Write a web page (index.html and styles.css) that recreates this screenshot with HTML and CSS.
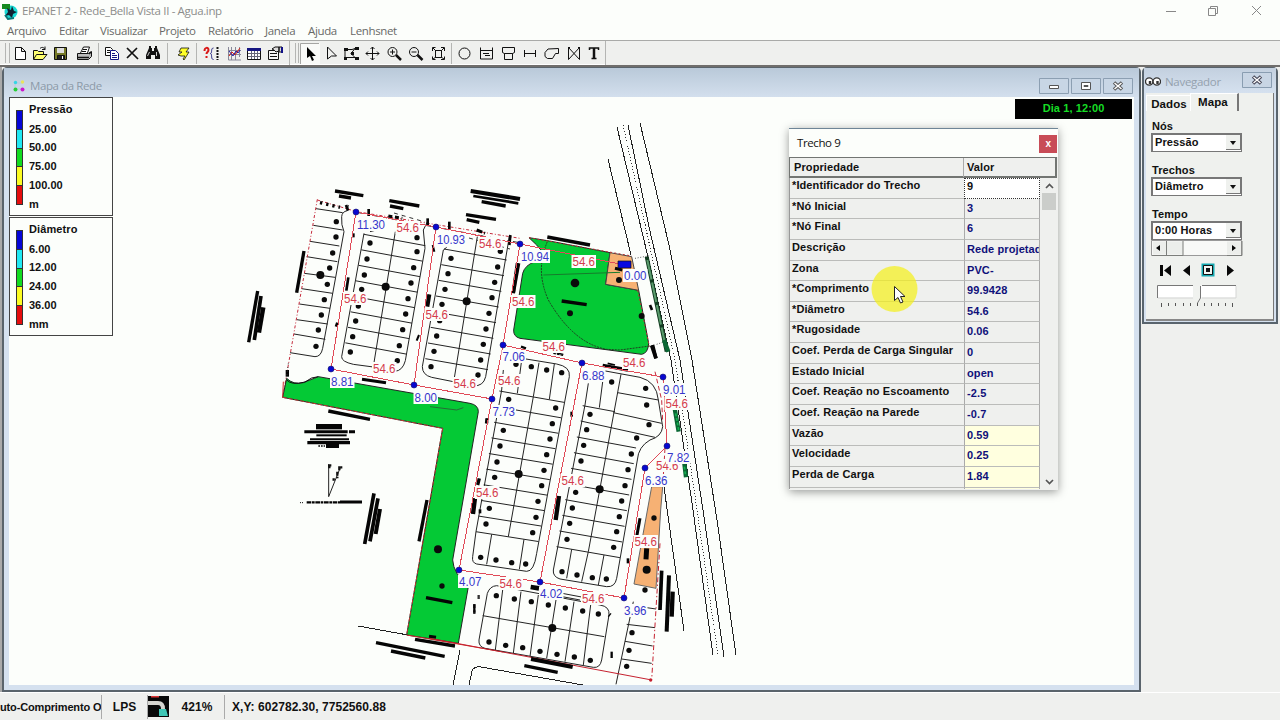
FILE: index.html
```html
<!DOCTYPE html>
<html lang="pt">
<head>
<meta charset="utf-8">
<title>EPANET 2</title>
<link rel="stylesheet" href="styles.css">
</head>
<body>
<header class="titlebar">
  <svg class="app-icon" width="16" height="17" viewBox="0 0 16 17"><circle cx="9" cy="9" r="6.500" fill="#19d9d5"/><path d="M0 1h8v5H0z" fill="#168a20"/><path d="M5 5l4 2 1-4 2 5 3 1-4 2-1 4-3-3-4 1 3-4z" fill="#123"/><path d="M3 12l3 4 6-1" stroke="#0a7779" fill="none" stroke-width="2"/></svg>
  <span class="app-title">EPANET 2 - Rede_Bella Vista II - Agua.inp</span>
  <svg class="win-controls" width="110" height="20" viewBox="1160 0 110 20" fill="none" stroke="#888"><path d="M1166 10.500h10M1208.500 7.500h7v7h-7zM1210.500 7v-1.500h7v7h-1.500M1252 5l9 9M1261 5l-9 9"/></svg>
</header>
<nav class="menu"><span class="m1">Arquivo</span><span class="m2">Editar</span><span class="m3">Visualizar</span><span class="m4">Projeto</span><span class="m5">Relatório</span><span class="m6">Janela</span><span class="m7">Ajuda</span><span class="m8">Lenhsnet</span></nav>
<div class="toolbar">
<svg width="1280" height="27" viewBox="0 40 1280 27" fill="none" stroke="#111">
  <path d="M0 40.500H1280" stroke="#a9aaa8"/><path d="M0 64.500H606" stroke="#fff"/><path d="M0 66H1280" stroke="#706e6c" stroke-width="2"/>
  <path d="M5.500 43v20M9.500 43v20M98.500 43v21M167.500 43v21M196.500 43v21M289.500 41v24M295.500 43v20M298.500 43v20M451.500 43v21M605.500 41v24" stroke="#b4b5b3"/>
  <path d="M301 43h19v21h-19z" fill="#f9faf8" stroke="none"/><path d="M300.500 64V43.500H319" stroke="#a5a5a3"/>
  <path d="M15.500 47.500h6l4 4v8h-10zM21.500 47.500v4h4" fill="#fff"/>
  <path d="M33.500 59V50.500h4l1 1h5v3M33.500 59.500l3-5h10.500l-4 5z" fill="#ffff70"/><path d="M40 48.500c2-2 4-1 5 1m0-3v3h-3"/>
  <path d="M54.500 47.500h12v12h-12z" fill="#777a28"/><path d="M57 48h7v5h-7z" fill="#ddd" stroke="none"/><path d="M57.500 55.500h7v4h-7z" fill="#222"/><path d="M62.500 56v3" stroke="#fff"/>
  <path d="M80.500 53l3-6h6l-2 6" fill="#fff"/><path d="M77.500 53.500h11l3-2v5l-3 3h-11z" fill="#bbb"/><path d="M78 57.500h11M89 54l2-2" stroke-width="1.500"/><path d="M83 49.500h4M82 51.500h4"/>
  <path d="M105.500 47.500h5l2 2v6h-7z" fill="#fff"/><path d="M110.500 50.500h5l3 3v6h-8z" fill="#fff" stroke="#151584"/><path d="M107 50.500h3M107 52.500h3"/><path d="M112 53.500h3M112 55.500h5M112 57.500h5" stroke="#151584"/>
  <path d="M127 48l11 11M137 48L127 58" stroke-width="1.700"/>
  <path d="M149 48h3v3h2v-3h3l3 7v4h-5v-4h-4v4h-5v-4zM149 46h2v2h-2zM155 46h2v2h-2z" fill="#111" stroke="none"/><path d="M149.500 52l-2 4M156.500 52v4" stroke="#ccc"/>
  <path d="M181 48h8l-3 4h3l-5 8-1-1 2-3h-4l-3-1 4-3h-3z" fill="#ffff28" stroke-width=".8"/>
  <path d="M204.500 51c0-4 4-4 4-1 0 2-2 2-2 4M206.500 56v2" stroke="#d91919" stroke-width="2"/><path d="M213.500 48c-3 0-1 5-3 5.500 2 .5 0 6 3 6" stroke="#202080"/><path d="M217.500 47v13" stroke-width="2" stroke-dasharray="2 1"/>
  <path d="M228.500 47v13H241M228 50.500h13M228 54.500h13M231.500 47v13M235.500 47v13M239.500 47v10" stroke="#889"/><path d="M229 56l3-4 3 3 5-7" stroke="#d21"/><path d="M229 51l4 5 3-5 2 2 2-3" stroke="#22a"/>
  <path d="M247.500 48.500h13v11h-13z" fill="#fff"/><path d="M247 49.500h14" stroke="#161681" stroke-width="3"/><path d="M248 53.500h12M248 56.500h12M251.500 51v8M254.500 51v8M257.500 51v8" stroke="#667"/>
  <path d="M268.500 50.500h10v9h-10z" fill="#f4f4f4"/><path d="M270 53.500h7M270 56.500h7"/><path d="M272 49l3-2h4v4l-3 1-2-2zM279 47h3v5h-3z" fill="#ddd"/><path d="M282 47v6" stroke="#118" stroke-width="2"/>
  <path d="M307 47v11l3-2 2 5 2-1-2-4h4z" fill="#000" stroke="none"/><path d="M327.500 47v12l4-3h5z"/>
  <path d="M346 49.500h6l3-1-4 5 4 4h-10v-8z"/><path d="M344 48h4v3h-4zM355 47h4v3h-4zM351 52h3v3h-3zM344 57h3v3h-3zM355 57h4v3h-4z" fill="#111" stroke="none"/>
  <path d="M372.500 47v13M366 53.500h13M370.500 49l2-2 2 2M370.500 58l2 2 2-2M368 51.500l-2 2 2 2M377 51.500l2 2-2 2"/>
  <circle cx="392.500" cy="52" r="4.500"/><path d="M390 52h5M392.500 49.500v5"/><path d="M396 55l5 5" stroke-width="2.500"/><circle cx="414" cy="52" r="4.500"/><path d="M411.500 52h5"/><path d="M417.500 55l5 5" stroke-width="2.500"/>
  <path d="M435.500 50.500h6v7h-6zM432.500 51v-3.500h3M441 47.500h3.500V51M432.500 56.500v3h3M441 59.500h3.500v-3M433 48l3 3M444 48l-3 3M433 59l3-2M444 59l-3-2"/>
  <circle cx="464.500" cy="53.500" r="5.500"/><path d="M480.500 47.500v11.500h12V47.500M480 50.500h12M483 53.500h6M485 55.500h5"/><path d="M502.500 47.500h12v5l-2 1h-8l-2-1zM504.500 53.500h8v6h-8z"/><path d="M524.500 50v7M535.500 50v7M524 53.500h12"/><path d="M558.500 48.500v5h-3l-3 5h-5l-2.500-2v-4l3-3.500z"/><path d="M568.500 47.500v12l11-12v12zM568 47.500h2M578 47.500h2"/>
  <path d="M589.500 50v-2h9v2" stroke-width="1.500"/><path d="M594 48v10.500" stroke-width="2.500"/><path d="M591.500 58.500h5" stroke-width="1.500"/>
</svg>
</div>
<main class="desktop">
  <section class="map-window">
    <div class="map-title">
      <svg width="12" height="12" viewBox="0 0 12 12"><path d="M3 3h7M2 9h7M2 3v6" stroke="#bcd"/><circle cx="2.500" cy="2.500" r="1.700" fill="#35d5e5"/><circle cx="9.500" cy="2" r="1.700" fill="#e9e45c"/><circle cx="2.500" cy="9.500" r="2" fill="#28cf38"/><circle cx="9.500" cy="9.500" r="2" fill="#cc19cc"/></svg>
      <span class="map-name">Mapa da Rede</span>
      <span class="mdi-buttons">
        <svg width="30" height="17"><path d="M.5 .5h29v15H.5z" fill="#c8d6e5" stroke="#8c9fb2"/><path d="M10.500 7.500h9v3h-9z" fill="#fff" stroke="#555"/></svg>
        <svg width="30" height="17"><path d="M.5 .5h29v15H.5z" fill="#c8d6e5" stroke="#8c9fb2"/><path d="M10.500 4.500h9v7h-9z" fill="#fff" stroke="#555"/><path d="M13 7.500h4v1h-4z" stroke="#555"/></svg>
        <svg width="30" height="17"><path d="M.5 .5h29v15H.5z" fill="#c8d6e5" stroke="#8c9fb2"/><path d="M11 4.500l8 7M19 4.500l-8 7" stroke="#555" stroke-width="3.500"/><path d="M11.500 5l7 6M18.500 5l-7 6" stroke="#fff" stroke-width="1.500"/></svg>
      </span>
    </div>
    <div class="map-view">
      <svg class="network" id="network" viewBox="9 97 1125 588" width="1125" height="588"></svg>
      <div class="legends">
        <div class="legend"><div class="scale"><i class="c1"></i><i class="c2"></i><i class="c3"></i><i class="c4"></i><i class="c5"></i></div><div class="ticks"><span class="first">Pressão</span><span>25.00</span><span>50.00</span><span>75.00</span><span>100.00</span><span>m</span></div></div>
        <div class="legend"><div class="scale"><i class="c1"></i><i class="c2"></i><i class="c3"></i><i class="c4"></i><i class="c5"></i></div><div class="ticks"><span class="first">Diâmetro</span><span>6.00</span><span>12.00</span><span>24.00</span><span>36.00</span><span>mm</span></div></div>
      </div>
      <div class="clock">Dia 1, 12:00</div>
    </div>
  </section>
  <aside class="navigator">
    <div class="nav-title">
      <svg width="16" height="12" viewBox="0 0 16 12" fill="#fff" stroke="#333" stroke-width="1.300"><circle cx="4.200" cy="5.500" r="3.700"/><circle cx="11.800" cy="5.500" r="3.700"/><path d="M5 5v3M12.500 5v3" stroke-width="2.400"/></svg>
      <span class="nav-name">Navegador</span>
      <svg class="nav-close" width="31" height="17"><path d="M.5 .5h29v15H.5z" fill="#c8d5e4" stroke="#899db1"/><path d="M11 4.500l8 7M19 4.500l-8 7" stroke="#445" stroke-width="3.500"/><path d="M11.500 5l7 6M18.500 5l-7 6" stroke="#fff" stroke-width="1.300"/></svg>
    </div>
    <div class="nav-body">
      <div class="tabs"><span class="tab">Dados</span><span class="tab on">Mapa</span></div>
      <div class="fields">
        <label>Nós</label><div class="combo"><span>Pressão</span><b><i></i></b></div>
        <label class="l2">Trechos</label><div class="combo"><span>Diâmetro</span><b><i></i></b></div>
        <label class="l3">Tempo</label><div class="combo"><span>0:00 Horas</span><b><i></i></b></div>
        <svg width="92" height="72" viewBox="1151 240 92 72" fill="none">
          <path d="M1151.500 240.500h90v15h-90z" fill="#f8f9f7" stroke="#999"/><path d="M1153 241.500h13v13h-13zM1167 241.500h16v13h-16zM1227 241.500h14v13h-14z" fill="#eceeeb"/><path d="M1166.500 241v14M1152 255.500h31V241M1227 255.500h15V241" stroke="#7c7e7b"/>
          <path d="M1160 245v6l-4-3zM1232 245v6l4-3zM1160 265h3v11h-3zM1171 265v11l-7-5.500zM1190 265v11l-7-5.500zM1227 265v11l7-5.500z" fill="#080808"/>
          <path d="M1202.500 264.500h11v11h-11z" fill="#f3f5f2" stroke="#16aab2" stroke-width="2"/><path d="M1203.500 265.500h9v9h-9z" stroke="#111"/><path d="M1206 268h4v4h-4z" fill="#111"/>
          <path d="M1158 285.500h35v12h-35zM1200 285.500h36v12h-36z" fill="#fff"/><path d="M1157.500 298v-12.500H1193M1202 285.500h34" stroke="#777"/><path d="M1158 298h35M1202 298h34v-12" stroke="#d5d6d4"/><path d="M1193.500 286v13l4 4 3-4v-14z" fill="#f0f2ef"/><path d="M1200.500 286v12l-3 5" stroke="#777"/>
          <path d="M1161.500 303v4M1168.500 303v3M1175.500 303v3M1183.500 303v3M1190.500 303v3M1197.500 303v3M1204.500 303v3M1211.500 303v3M1218.500 303v3M1225.500 303v3M1232.500 303v4" stroke="#555"/>
        </svg>
      </div>
    </div>
  </aside>
  <section class="inspector">
    <div class="insp-title"><span>Trecho 9</span><b>x</b></div>
    <div class="insp-head"><span>Propriedade</span><span>Valor</span></div>
    <div class="insp-body">
      <div class="grid">
        <span>*Identificador do Trecho</span><span class="v focus">9</span>
        <span>*Nó Inicial</span><span class="v">3</span>
        <span>*Nó Final</span><span class="v">6</span>
        <span>Descrição</span><span class="v">Rede projetada</span>
        <span>Zona</span><span class="v">PVC-</span>
        <span>*Comprimento</span><span class="v">99.9428</span>
        <span>*Diâmetro</span><span class="v">54.6</span>
        <span>*Rugosidade</span><span class="v">0.06</span>
        <span>Coef. Perda de Carga Singular</span><span class="v">0</span>
        <span>Estado Inicial</span><span class="v">open</span>
        <span>Coef. Reação no Escoamento</span><span class="v">-2.5</span>
        <span>Coef. Reação na Parede</span><span class="v">-0.7</span>
        <span>Vazão</span><span class="v out">0.59</span>
        <span>Velocidade</span><span class="v out">0.25</span>
        <span>Perda de Carga</span><span class="v out">1.84</span>
        <span></span><span class="v out"></span>
      </div>
      <svg width="18" height="311" viewBox="0 0 18 311" fill="none"><path d="M2 15h14v17H2z" fill="#cbcdca"/><path d="M6 10l3.500-3.500L13 10M6 302l3.500 3.500L13 302" stroke="#555" stroke-width="1.700"/></svg>
    </div>
    <svg class="pointer" width="48" height="48" viewBox="870 266 48 48"><circle cx="894.500" cy="290" r="23" fill="#f4f01d" fill-opacity=".72"/><path d="M894.500 287.500v14l3.500-3 2.500 5.500 2.500-1-2.500-5.500h4.500z" fill="#fff" stroke="#222"/></svg>
  </section>
</main>
<footer class="status">
  <span class="s1">uto-Comprimento O</span><span class="s2">LPS</span>
  <svg width="22" height="24" viewBox="0 0 22 24"><path d="M0 1h21v21H0z" fill="#080808"/><path d="M3 1h8v1.500H3z" fill="#d33"/><path d="M0 8h10q5 0 5 6" fill="none" stroke="#d5d5d0" stroke-width="4"/><path d="M11 14h7l2 7h-9z" fill="#3fc7b6"/></svg>
  <span class="s3">421%</span><span class="s4">X,Y: 602782.30, 7752560.88</span>
</footer>
<script src="map.js"></script>
</body>
</html>
```
FILE: styles.css
```css
*{box-sizing:border-box}
body{margin:0;width:1280px;height:720px;overflow:hidden;display:flex;flex-direction:column;background:#eff0ee;font:bold 11px/14px "Liberation Sans",Arial,sans-serif;letter-spacing:.1px;color:#111}
svg{display:block;flex:none}
.titlebar{height:22px;background:#fcfefb;display:flex;align-items:center;padding:0 10px 0 2px;flex:none}
.app-title{margin-left:4px;font:11.500px/20px "Open Sans","Noto Sans",sans-serif;color:#8c8d8b;letter-spacing:-.35px;flex:1;white-space:nowrap}
.menu{height:18px;background:#fcfefb;flex:none;display:flex;font:11.500px/18px "Open Sans","Noto Sans",sans-serif;color:#686967;letter-spacing:-.35px;padding-left:7px}
.menu span{white-space:nowrap}
.m1{width:52px}.m2{width:41px}.m3{width:59px}.m4{width:49px}.m5{width:57px}.m6{width:43px}.m7{width:42px}
.toolbar{height:27px;flex:none;background:#eff0ee}
.desktop{height:625px;flex:none;display:flex;position:relative;background:#eff0ee;gap:1px;border-left:2px solid #aaa}
.map-window{width:1139px;height:625px;border:2px solid #5a646c;border-top-width:1px;border-radius:5px 5px 0 0;background:#d5e1ef;padding:0 5px 5px}
.map-title{height:29px;display:flex;align-items:center;margin:0 -5px;padding:7px 6px 0 9px;background:linear-gradient(#b9c9d9,#d3dfed)}
.map-name{font:11.500px/16px "Open Sans","Noto Sans",sans-serif;color:#8c9aa8;letter-spacing:-.4px;margin-left:5px;flex:1}
.mdi-buttons{display:flex;gap:2px}
.map-view{position:relative;height:588px;background:#fcfefb}
.network{position:absolute;left:0;top:0}
.network text{font:12px "Liberation Sans",Arial,sans-serif;letter-spacing:0}
.legends{position:absolute;left:0;top:0;display:flex;flex-direction:column;gap:1px}
.legend{width:104px;height:119px;border:1px solid #444;background:#fcfefb;display:flex;padding:12px 6px}
.scale{width:7px;height:95px;border:1px solid #333;display:flex;flex-direction:column}
.scale i{flex:1;border-bottom:1px solid #333}
.c1{background:#0606d7}.c2{background:#20e9f3}.c3{background:#12dc20}.c4{background:#fcfc22}.c5{background:#e50d0d}
.scale .c5{border:0}
.ticks{display:flex;flex-direction:column;margin:-8px 0 0 6px;letter-spacing:0}
.ticks span{height:18.800px;line-height:14px;flex:none}.ticks .first{height:19.500px;letter-spacing:.1px}
.clock{position:absolute;right:2px;top:2px;width:117px;height:20px;background:#000;color:#16dc25;text-align:center;line-height:19px;letter-spacing:.1px}
.navigator{width:136px;height:257px;border:2px solid #59646d;border-top-width:1px;border-radius:5px 5px 0 0;background:#d5e1ef;padding:0 2px 2px}
.nav-title{height:25px;display:flex;padding:2px 0 0;margin:0 -2px;background:linear-gradient(#c3d0df,#d5e1ef);align-items:center}
.nav-name{font:11.500px/14px "Open Sans","Noto Sans",sans-serif;color:#94a1ae;letter-spacing:-.3px;flex:1;margin-left:4px}
.nav-close{margin:-2px 3px 0 0}
.nav-title>svg:first-child{margin-left:1px}
.nav-body{height:228px;background:#eff1ee;border-right:1px solid #777;border-bottom:2px solid #888}
.tabs{display:flex;align-items:flex-end;height:18px;font-size:11.500px}
.tab{width:44px;height:16px;text-align:center;line-height:17px;border-top:1px solid #fff;border-left:1px solid #fff;padding-left:1px}
.tab.on{width:49px;height:18px;border-right:2px solid #777;line-height:16px;text-align:left;padding-left:7px}
.fields{padding:8px 0 0 5px}
.fields label{display:block;height:14px;margin-left:1px}
.fields .l2,.fields .l3{margin-top:11px}
.combo{width:91px;height:19px;border:1px solid #777;border-width:2px 1px 1px 2px;background:#fff;display:flex;justify-content:space-between;padding-left:2px;line-height:15px}
.combo b{width:15px;height:15px;background:#eff1ee;border-right:1px solid #777;border-bottom:1px solid #777;padding:6px 0 0 4px}
.combo i{display:block;border:3.500px solid transparent;border-top:4px solid #111;width:0;height:0}
.inspector{position:absolute;left:787px;top:61px;width:269px;height:362px;background:#eff0ee;border-top:1px solid #6e8597;box-shadow:0 2px 9px #0006}
.insp-title{height:28px;background:#fcfefb;display:flex;justify-content:space-between;padding:0 1px 0 8px;font:11.500px/27px "Open Sans","Noto Sans",sans-serif;letter-spacing:-.4px}
.insp-title b{width:18px;height:18px;background:#c84c57;color:#fff;font:bold 10px/17px "Liberation Sans",sans-serif;text-align:center;margin-top:6px}
.insp-head{display:grid;grid-template-columns:173px 1fr;height:21px;border:2px solid #727572;border-width:1px 2px 2px 1px;margin:0 1px 0 0;line-height:19px}
.insp-head span{padding-left:4px}.insp-head span+span{border-left:1px solid #aaa;padding-left:3px}
.insp-body{display:flex;height:311px;overflow:hidden}
.grid{width:251px;display:grid;grid-template-columns:174px 76px;grid-auto-rows:20.650px;border-left:1px solid #999}
.grid>span{border-bottom:1px solid #bbbcba;padding-left:2px;line-height:14px;white-space:nowrap;overflow:hidden}
.grid .v{border-left:1px solid #aaa;border-right:1px solid #aaa;padding-left:2px;line-height:18px;color:#10107a}
.grid .focus{background:#fff;border:1px dotted #333;color:#111;line-height:15px}
.grid .out{background:#ffffdf}
.pointer{position:absolute;left:81px;top:136px}
.status{height:28px;flex:none;display:flex;align-items:center;background:#eff0ee;border-top:1px solid #fff;font-size:12px;letter-spacing:.05px;padding-top:1px}
.status span{height:24px;line-height:24px;white-space:nowrap;border-right:1px solid #aaa}
.status .s1{width:102px;overflow:hidden;font-size:11px;letter-spacing:-.15px}.s2{width:46px;text-align:center}.s3{width:55px;text-align:center}.status .s4{padding-left:7px;border:0}
```
FILE: map.js
```js
const parts = [];
const add = s => parts.push(s);
// Survey sheets are drawn at three units per pixel, each with its own origin.
const sheet = (x, y, draw) => { add(`<g transform="translate(${x} ${y}) scale(.33333)" stroke-width="3">`); draw(); add('</g>'); };
const path = (d, stroke = '#222', extra = '') => add(`<path d="${d}" fill="none" stroke="${stroke}" ${extra}/>`);
const fill = (d, color, stroke = 'none') => add(`<path d="${d}" fill="${color}" stroke="${stroke}"/>`);
const dots = (list, r = 8) => list.forEach(([x, y]) => add(`<circle cx="${x}" cy="${y}" r="${r}" fill="#0b0b0b" stroke="none"/>`));
const bars = (list) => list.forEach(([a, b, c, d, w = 10, dash = '']) => path(`M${a} ${b}L${c} ${d}`, '#050505', `stroke-width="${w}" stroke-dasharray="${dash}"`));
const rows = (n, l, r, dl, dr, first = 0) => { for (let i = first; i < n; i++) path(`M${l[0] + dl[0] * i} ${l[1] + dl[1] * i}L${r[0] + dr[0] * i} ${r[1] + dr[1] * i}`); };

add('<g stroke-width="1" shape-rendering="crispEdges">');
path('M617 127L648 257 671 360 693 510 713 655M628 125L649 227 680 360 703 510 724 657M640 123L669 245 692 360 717 520 736 655M608 159L631 255M664 487L684 631');
path('M623 125L675 360 697 510 718 655', '#333', 'stroke-dasharray="1 2"');
path('M358 626L408 635M460 650L453 685M469 685L472 671Q474 666 481 667L583 685');
add('</g>');

sheet(240, 170, () => {
  path('M228 116L308 128M220 166L308 180M210 214L298 228M200 260L292 275M193 310L285 322M185 356L278 370M178 402L270 415M170 449L263 462M162 492L256 508M150 548L225 560Q243 560 248 535L312 185Q303 165 305 140Q306 125 322 122L325 105');
  path('M232 88L128 682M232 90L350 125 840 205', '#c52b3c', 'stroke-dasharray="9 6 3 6"');
  path('M350 127L588 172 838 218', '#333', 'stroke-dasharray="16 20 3 14"');
  path('M372 190L305 560Q304 575 340 583L400 591L465 604Q488 602 496 572L555 235 550 180 565 150M466 185L400 590M390 185L410 180');
  rows(8, [372, 193], [556, 227], [-8, 46.5], [-8, 46.5]);
  path('M620 232L610 240 547 590Q547 615 575 622L700 647Q730 650 737 620L808 200M712 200L642 630');
  rows(8, [612, 237], [800, 270], [-8, 47], [-8, 47]);
  dots([[289,155],[288,201],[278,249],[269,294],[262,343],[253,389],[244,435],[235,480],[228,529],[531,203],[531,245],[521,293],[513,339],[504,386],[497,432],[488,479],[478,527],[472,572],[390,219],[381,267],[373,315],[365,358],[355,408],[347,453],[338,500],[331,546],[781,244],[773,291],[764,337],[756,383],[747,430],[738,477],[730,523],[722,570],[714,615],[633,265],[624,311],[615,358],[606,403],[599,452],[590,498],[582,544],[573,590]]);
  dots([[241,315],[437,350],[680,394]], 12);
  bars([[285,63,370,77],[297,78,333,84],[448,92,538,108],[450,108,490,116],[692,63,840,87,12],[700,78,835,100,8],[725,95,797,108],[678,134,768,148],[680,149,718,157],[192,243,170,368],[53,363,26,517],[63,378,43,510,11],[70,412,57,488,13],[325,322,319,362,8],[568,373,562,410,12],[836,280,820,370,10],[240,98,300,112,10,'7 12'],[445,138,487,145,9,'12 8'],[710,180,735,190,9,'18 6'],[386,117,386,138,8],[563,145,563,168,8],[628,155,628,180,8],[811,195,808,225,8],[142,600,142,620,10],[366,628,438,638,9],[318,105,324,122,8],[578,225,583,245,6],[340,190,340,202,8],[292,458,288,470,8],[537,495,530,512,6]]);
});

sheet(460, 110, () => {
  fill('M207 383L268 393 450 428 437 523 536 541 566 700Q564 730 545 733L180 685Q160 680 161 660L188 490Q195 465 225 455L268 450L230 405Z', '#04c935', '#222');
  fill('M450 428L515 440 536 541 437 523Z', '#f6b174', '#444');
  path('M262 395Q225 480 265 570Q340 700 440 718L480 720 570 708', '#203c20', 'stroke-dasharray="6 3"');
  path('M250 495L480 487', '#167b2c');
  path('M207 383L515 438M533 541L568 710', '#b33', 'stroke-dasharray="6 7"');
  dots([[345,519]], 13); dots([[330,610],[477,510],[545,618]], 9);
  bars([[305,573,380,584],[262,381,390,405],[172,460,160,548],[575,706,588,745,11],[570,585,576,600,8],[465,475,487,480,9],[290,729,310,733,4]]);
  path('M560 440L620 725', '#123d20', 'stroke-width="12"'); path('M562 450L618 715', '#5a9b6c', 'stroke-width="6" stroke-dasharray="60 9"');
  path('M525 445L570 437M590 703L608 697', '#555', 'stroke-dasharray="3 5"');
});

sheet(240, 360, () => {
  fill('M140 55Q160 75 190 68L235 50 690 130Q715 135 715 155L638 600Q640 640 685 680L655 850L500 825L608 205L128 112Z', '#04c935', '#222');
  path('M140 60Q155 77 195 66Q215 50 235 50', '#111'); path('M145 10L140 50', '#333', 'stroke-dasharray="3 8"');
  path('M608 205L500 825M128 112L608 205', '#bb3a31', 'stroke-dasharray="12 6"');
  path('M570 140L650 150 670 143', '#246b35');
  path('M500 825L790 876M130 65L128 112', '#cd2c2c');
  dots([[594,568]], 12); dots([[606,678]], 8);
  bars([[265,153,390,178],[228,200,306,200,16],[193,215,345,215,9,'130 4'],[229,226,320,226,6],[210,238,327,238,6],[202,248,330,248,10],[258,258,297,258,12],[235,258,255,258,5,'5 3'],[558,713,637,728],[408,848,614,889],[453,873,556,894],[525,838,645,858],[567,829,588,832,9],[402,400,374,552,11],[414,415,390,544,11],[420,447,407,522,12],[561,420,537,544,10],[200,427,300,427,7,'14 2 8 2'],[300,426,366,426,9],[180,428,190,428,3,'3 3'],[740,175,738,190,7]]);
  path('M266 410V313M266 410L302 320');
  path('M264 316h10M268 313v14M298 319v15M302 322h5M292 335v20M281 355v7', '#111', 'stroke-width="7" stroke-dasharray="12 3"');
  path('M703 732v30M716 705v15', '#333', 'stroke-width="7" stroke-dasharray="12 7"');
});

sheet(440, 340, () => {
  path('M215 50L350 72Q392 80 388 110L290 640Q282 695 260 694L110 672Q95 668 98 650L108 575 185 150 190 90M245 60L232 160M297 68L280 170 205 590M343 72L328 178');
  rows(10, [178, 153], [372, 187], [-7.8, 46.9], [-8.5, 46.4]);
  path('M155 583L140 673M252 598L238 688', '#222');
  path('M480 90L600 112Q650 125 655 180L668 260Q665 290 630 300Q595 320 592 360L530 715Q525 742 500 740L360 717Q338 710 340 690L435 195 445 130M490 110L478 203M543 103L445 635M428 197L525 215M533 158L655 180M520 218L665 250M422 243L645 292');
  rows(10, [428, 197], [602, 230], [-8.7, 47], [-6.9, 47], 2);
  path('M395 628L380 715M445 635L425 725M492 645L475 735');
  fill('M635 440L668 440 662 510 648 745 582 732Z', '#f6b174', '#666');
  dots([[228,73],[274,80],[320,90],[365,98],[206,178],[347,204],[337,251],[330,297],[320,344],[312,391],[305,437],[294,484],[288,532],[190,271],[180,318],[171,366],[164,412],[148,505],[138,552],[278,578],[122,652],[168,660],[215,668],[257,672],[515,126],[617,145],[620,195],[627,254],[590,294],[574,342],[564,389],[555,437],[545,483],[538,530],[530,575],[521,622],[450,223],[440,269],[431,316],[423,363],[407,457],[397,504],[389,550],[381,598],[366,695],[411,705],[457,713],[499,717],[642,534]]);
  dots([[236,402],[479,448]], 12); dots([[620,689]], 12);
  bars([[488,76,564,90],[105,475,99,522,13],[357,468,347,540,13],[638,15,648,55,10],[118,415,113,435,10],[715,360,715,375,5],[600,535,590,590,9],[620,625,618,658,15],[665,692,660,810,11],[687,706,680,875,12],[698,755,695,830,13],[243,20,258,25,7],[340,40,372,47,4,'8 3'],[503,70,525,75,5],[141,235,141,250,8],[395,215,395,230,8],[120,508,120,520,8],[564,655,564,670,8]]);
  path('M672 0L685 35M704 205L716 275M733 370L738 412', '#0b6734', 'stroke-width="13"');
  path('M707 220L716 270M733 380L737 408', '#13b150', 'stroke-width="5" stroke-dasharray="9 5"');
  path('M645 95L665 180 668 245M675 325L668 440', '#c52b3c', 'stroke-dasharray="14 8"');
});

sheet(430, 510, () => {
  path('M172 250Q180 228 200 227L510 285Q540 290 537 315L515 450Q510 475 490 472L165 415Q145 410 147 390ZM158 317L523 380M218 240L196 420M273 245L250 430M325 255L300 440M378 270L350 445M432 275L405 455M482 285L460 465M610 275L558 523M615 288L678 297M590 343L675 353M585 394L668 408M575 447L665 460M370 245L460 262M370 255L450 270');
  dots([[199,257],[253,267],[304,275],[355,285],[406,294],[458,303],[505,312],[177,396],[227,406],[278,413],[330,424],[381,433],[433,441],[481,451],[606,368],[597,421],[590,469],[645,240]]);
  dots([[367,354]], 12);
  path('M0 385L665 510', '#c5202e'); path('M690 100L665 510', '#c5202e', 'stroke-dasharray="15 7 4 8"');
  add('<circle cx="662" cy="510" r="5" fill="#c5202e" stroke="none"/>');
  bars([[303,447,428,471,12],[283,467,383,487],[302,231,327,235,14],[545,425,545,444,7],[133,283,133,308,7],[543,310,535,320,4]]);
});

const nodes = [[356,212],[436,227],[520,244],[331,369],[414,385],[492,399],[503,345],[582,363],[663,377],[667,446],[645,468],[459,570],[540,582],[624,598]];
path('M331 369L356 212 436 227 520 244 625 265M331 369L414 385 492 399M436 227L414 385M520 244L503 345 492 399 459 570 540 582 624 598 645 468 667 446 663 377 582 363 503 345M582 363L540 582', '#e04a57', 'shape-rendering="crispEdges"');
path('M394 213L425 222M469 238L510 249', '#333', 'stroke-dasharray="4 4"');
const label = (x, y, t, color) => {
  const w = t.length === 5 ? 28 : 22.5;
  add(`<rect x="${x - 1}" y="${y - 6}" width="${w + 2}" height="13" fill="#fcfefb"/><text x="${x}" y="${y + 4.5}" textLength="${w}" lengthAdjust="spacingAndGlyphs" fill="${color}">${t}</text>`);
};
[[396.5,227],[479,243],[572.5,261],[344,298],[425.5,314],[512,301],[373,368],[453.5,383],[542.5,346],[623,362],[498,380],[665.500,403],[656,465],[561.5,480],[476,492],[634.5,541],[499.5,583],[582,598]].forEach(([x, y]) => label(x, y, '54.6', '#d43b4c'));
[[357,224,'11.30'],[437,239,'10.93'],[521,256,'10.94'],[624,275,'0.00'],[331,381,'8.81'],[414.5,397,'8.00'],[492.5,411,'7.73'],[502.5,356,'7.06'],[582,375,'6.88'],[663,389,'9.01'],[667,457,'7.82'],[645,480,'6.36'],[459,581,'4.07'],[540,593,'4.02'],[624,610,'3.96']].forEach(([x, y, t]) => label(x, y, t, '#3636cb'));
add('<path d="M618 261h13v7h-13z" fill="#0808df" stroke="#111" stroke-width=".7"/>');
nodes.forEach(([x, y]) => add(`<circle cx="${x}" cy="${y}" r="3" fill="#0808cf" stroke="#151566" stroke-width=".6"/>`));
document.getElementById('network').innerHTML = parts.join('');
```
